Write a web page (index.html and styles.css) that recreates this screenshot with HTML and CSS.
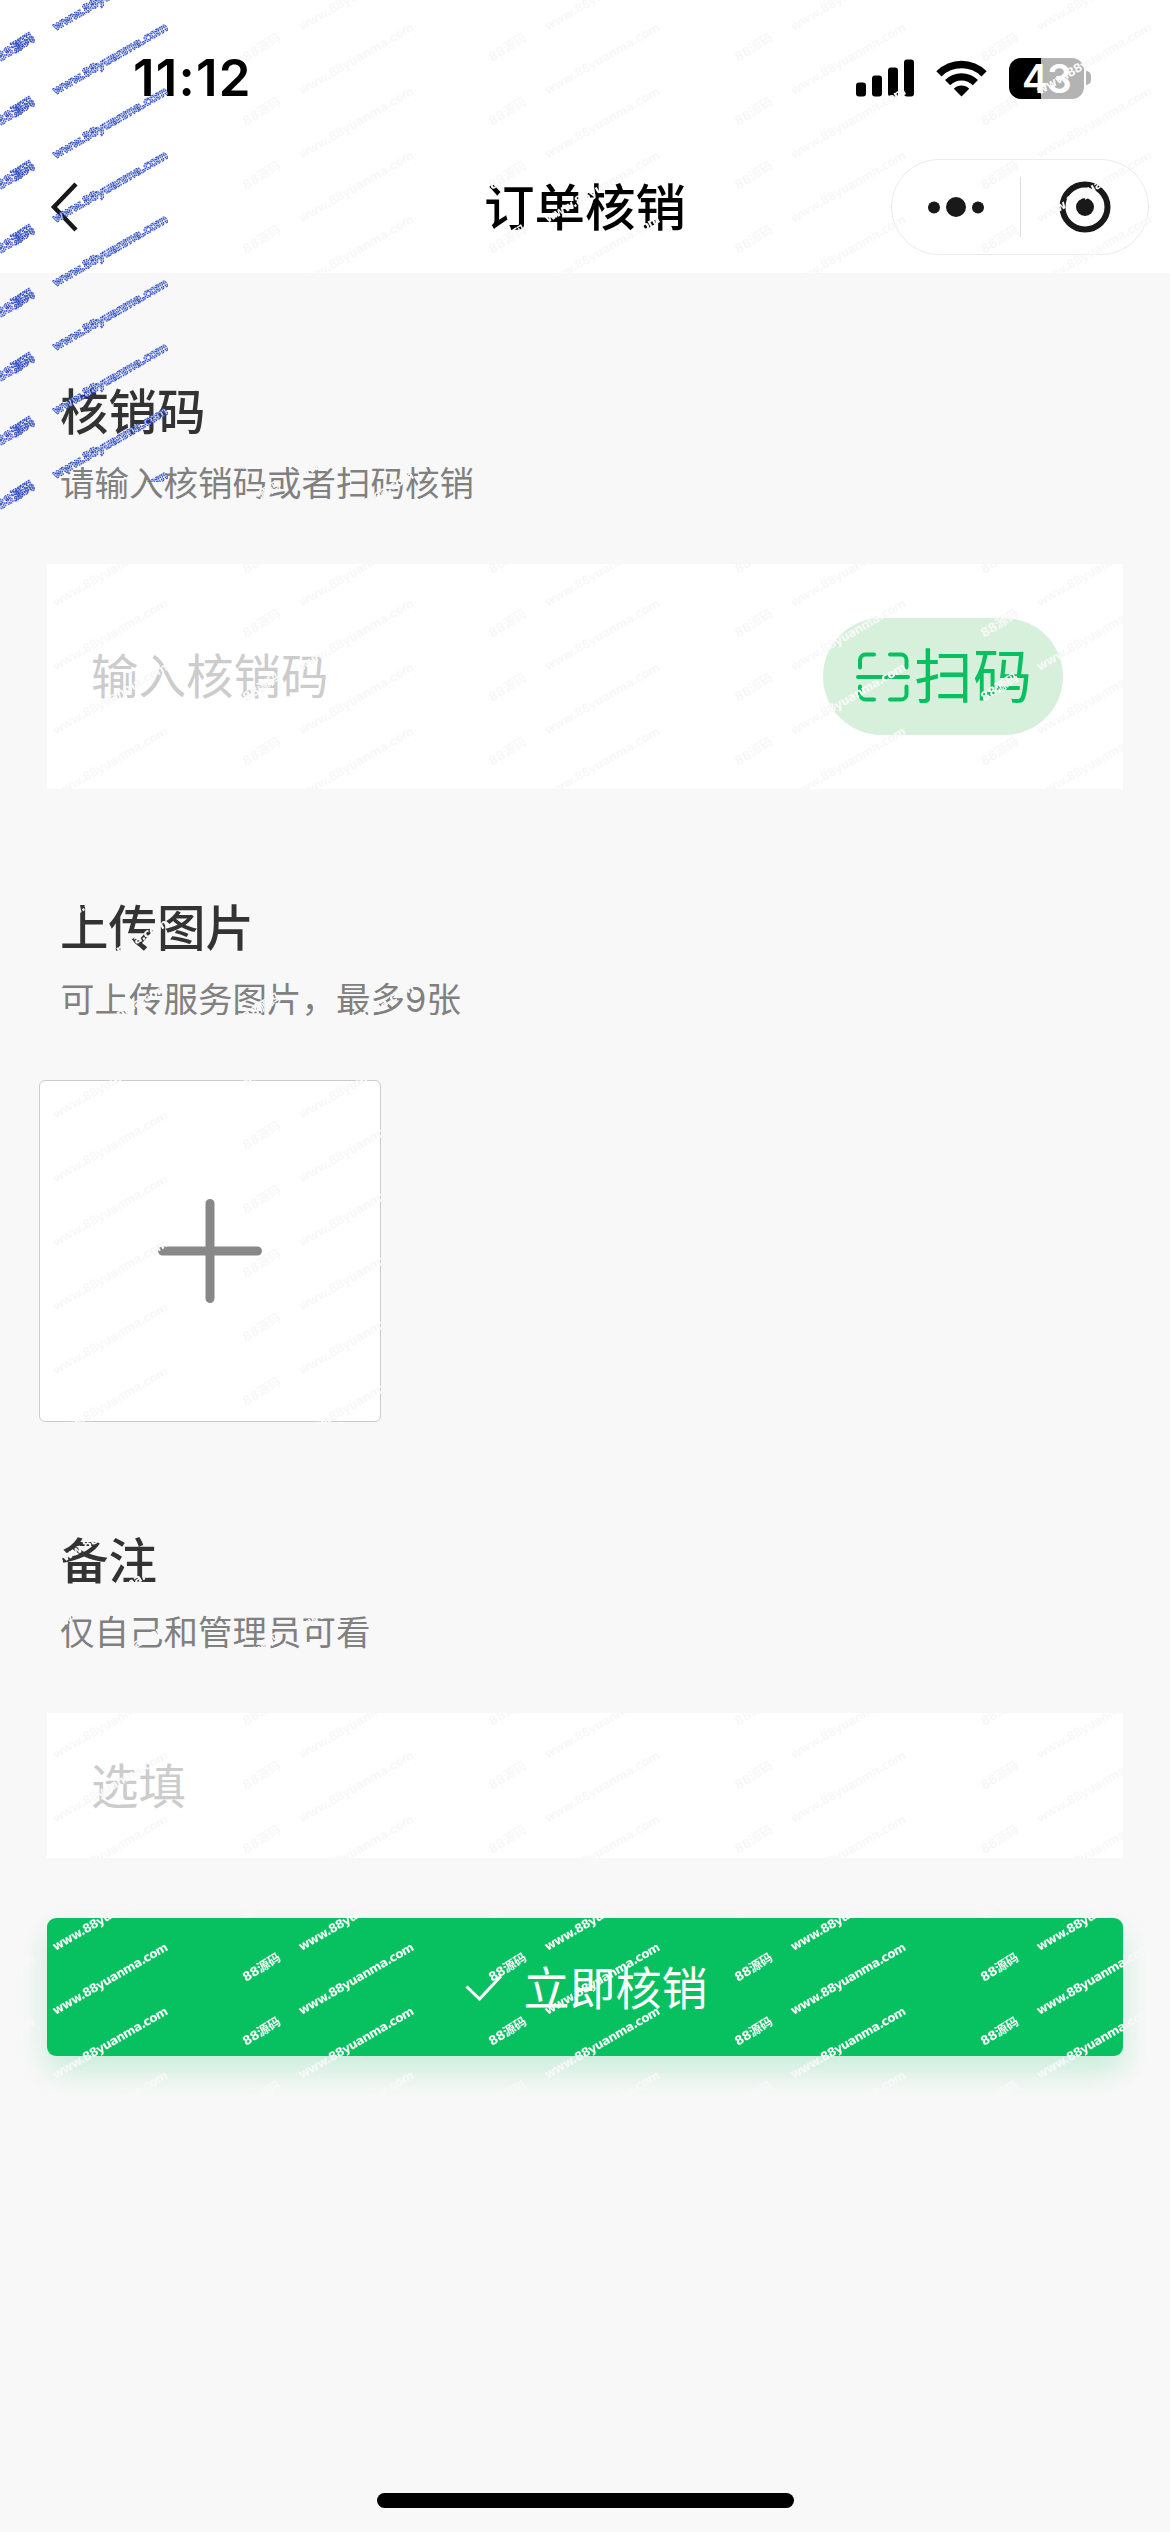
FILE: index.html
```html
<!DOCTYPE html>
<html lang="zh-CN">
<head>
<meta charset="utf-8">
<title>订单核销</title>
<link rel="stylesheet" href="styles.css">
</head>
<body>
<div class="page">
  <header class="header">
    <div class="status">
      <span class="time">11:12</span>
      <div class="status-icons">
        <svg class="signal" viewBox="0 0 58 38"><rect x="0" y="23.5" width="10" height="14" rx="3"/><rect x="16" y="16.500" width="10" height="21" rx="3"/><rect x="32" y="8.500" width="10" height="29" rx="3"/><rect x="48" y="0.500" width="10" height="37" rx="3"/></svg>
        <svg class="wifi" viewBox="0 0 51 38"><path d="M0.300 12.200a35.800 35.800 0 0 1 50.400 0l-5.200 5.300a28.300 28.300 0 0 0-40 0z"/><path d="M9 21a23.400 23.400 0 0 1 33 0l-5.200 5.200a16 16 0 0 0-22.600 0z"/><path d="M17.800 29.700a11 11 0 0 1 15.400 0L25.500 37.400z"/></svg>
        <div class="battery"><span class="battery-body">43</span><span class="battery-cap"></span></div>
      </div>
    </div>
    <div class="navbar">
      <svg class="back" viewBox="0 0 30 52"><path d="M26 3L4 26L26 49"/></svg>
      <h1 class="title">订单核销</h1>
      <div class="capsule">
        <svg class="more" viewBox="0 0 56 20"><circle cx="6" cy="10.500" r="6"/><circle cx="28" cy="10" r="10"/><circle cx="50" cy="10.500" r="6"/></svg>
        <span class="divider"></span>
        <svg class="target" viewBox="0 0 52 52"><circle class="ring" cx="26" cy="26" r="22.500"/><circle cx="26" cy="26" r="9"/></svg>
      </div>
    </div>
  </header>

  <main class="main">
    <section class="section-head">
      <h2>核销码</h2>
      <p>请输入核销码或者扫码核销</p>
    </section>
    <div class="field code-field">
      <span class="placeholder">输入核销码</span>
      <div class="scan">
        <svg class="scan-icon" viewBox="0 0 54 50"><path d="M4 15.500V8a5.500 5.500 0 0 1 5.500-5.500H18M34 2.500h11A5.500 5.500 0 0 1 50.500 8v7.500M4 34.500V42a5.500 5.500 0 0 0 5.500 5.500H18M34 47.500h11A5.500 5.500 0 0 0 50.500 42v-7.500M2 25h50"/></svg>
        <span>扫码</span>
      </div>
    </div>

    <section class="section-head">
      <h2>上传图片</h2>
      <p>可上传服务图片，最多9张</p>
    </section>
    <div class="upload">
      <svg class="plus" viewBox="0 0 106 106"><path d="M53 5.500v95M5.500 53h95"/></svg>
    </div>

    <section class="section-head">
      <h2>备注</h2>
      <p>仅自己和管理员可看</p>
    </section>
    <div class="field note-field"><span class="placeholder">选填</span></div>

    <div class="submit">
      <svg class="check" viewBox="0 0 38 28"><path d="M1.500 12.500L14.500 25L36 2"/></svg>
      <span>立即核销</span>
    </div>
  </main>

  <div class="home-indicator"></div>

  <svg class="watermark" viewBox="0 0 1170 2480">
    <defs>
      <pattern id="wm-light" x="40" y="0" width="246" height="64" patternUnits="userSpaceOnUse">
        <g class="wm-text">
          <text transform="translate(15.500 31) rotate(-30)" textLength="131">www.88yuanma.com</text>
          <text transform="translate(15.500 95) rotate(-30)" textLength="131">www.88yuanma.com</text>
          <text class="wm-name" transform="translate(206 62) rotate(-32)" textLength="42">88源码</text>
        </g>
      </pattern>
      <pattern id="wm-blue" x="-206" y="0" width="246" height="64" patternUnits="userSpaceOnUse">
        <g class="wm-text wm-text-blue">
          <text transform="translate(15.500 31) rotate(-30)" textLength="131">www.88yuanma.com</text>
          <text transform="translate(15.500 95) rotate(-30)" textLength="131">www.88yuanma.com</text>
          <text class="wm-name" transform="translate(206 62) rotate(-32)" textLength="42">88源码</text>
        </g>
      </pattern>
    </defs>
    <path fill="url(#wm-light)" d="M172 0H1170V2480H0V512H172z"/>
    <path fill="url(#wm-blue)" d="M0 0H172V482H40V512H0z"/>
  </svg>
</div>
</body>
</html>
```
FILE: styles.css
```css
* { box-sizing: border-box; }

body {
  margin: 0;
  background: #f8f8f8;
  font-family: "Inter", "Noto Sans CJK SC", sans-serif;
}

.page {
  position: relative;
  display: flex;
  flex-direction: column;
  width: 1170px;
  height: 2532px;
  overflow: hidden;
}

svg { display: block; flex: none; }
h1, h2, p { margin: 0; }

/* Status bar */
.header { height: 273px; background: #fff; }

.status {
  display: flex;
  align-items: center;
  justify-content: space-between;
  height: 156px;
  padding: 0 79px 0 133px;
}

.time {
  font: 600 51px/60px "Inter", sans-serif;
  letter-spacing: 1.2px;
}

.status-icons { display: flex; align-items: center; }
.signal { width: 58px; height: 38px; margin-right: 22px; }
.wifi { width: 51px; height: 38px; margin-right: 22px; }
.battery { display: flex; align-items: center; gap: 2px; }

.battery-body {
  width: 75px;
  height: 41px;
  border-radius: 12px;
  background: linear-gradient(90deg, #000 32px, #b3b3b3 32px);
  color: #fff;
  font: 600 39px/41px "Inter", sans-serif;
  letter-spacing: -1px;
  text-align: center;
}

.battery-cap {
  width: 5px;
  height: 14px;
  border-radius: 0 5px 5px 0;
  background: #b3b3b3;
}

/* Navigation bar */
.navbar {
  display: grid;
  grid-template-columns: 279px 1fr 258px;
  align-items: center;
  height: 102px;
  padding-right: 21px;
}

.back {
  width: 30px;
  height: 52px;
  margin-left: 50px;
  fill: none;
  stroke: #191919;
  stroke-width: 4.5;
}

.title {
  padding-top: 2px;
  font-size: 50.500px;
  font-weight: 500;
  line-height: 70px;
  text-align: center;
}

.capsule {
  display: flex;
  align-items: center;
  height: 96px;
  padding-left: 36px;
  border: 1px solid #ebebeb;
  border-radius: 48px;
  fill: #191919;
}

.more { width: 56px; height: 20px; }
.divider { flex: none; width: 1px; height: 60px; margin: 0 38px 0 36px; background: #dedede; }
.target { width: 52px; height: 52px; }
.ring { fill: none; stroke: #191919; stroke-width: 6; }

/* Form */
.main {
  display: flex;
  flex-direction: column;
  padding: 0 47px;
}

.section-head {
  padding: 105px 13px 0;
  height: 291px;
}

.section-head h2 {
  color: #333;
  font-size: 48.500px;
  font-weight: 500;
  line-height: 70px;
}

.section-head p {
  margin-top: 11px;
  color: #808080;
  font-size: 34.500px;
  line-height: 50px;
}

.field {
  display: flex;
  align-items: center;
  justify-content: space-between;
  background: #fff;
}

.code-field { height: 225px; padding: 0 60px 0 44px; }
.note-field { height: 145px; padding: 3px 44px 0; }
.placeholder { color: #ccc; font-size: 47.500px; line-height: 70px; }

.scan {
  display: flex;
  align-items: center;
  gap: 4px;
  width: 240px;
  height: 117px;
  padding-left: 33px;
  border-radius: 59px;
  background: #d7f0db;
  color: #07c160;
  font-size: 59px;
  line-height: 80px;
}

.scan-icon {
  width: 54px;
  height: 50px;
  fill: none;
  stroke: #07c160;
  stroke-width: 4;
  stroke-linecap: round;
}

.upload {
  display: flex;
  align-items: center;
  justify-content: center;
  width: 342px;
  height: 342px;
  margin-left: -8px;
  border: 1px solid #ccc;
  border-radius: 6px;
  background: #fff;
}

.plus {
  width: 106px;
  height: 106px;
  fill: none;
  stroke: #888;
  stroke-width: 9;
  stroke-linecap: round;
}

.submit {
  display: flex;
  align-items: center;
  justify-content: center;
  gap: 21px;
  height: 138px;
  margin-top: 60px;
  padding: 2px 0 0 2px;
  border-radius: 9px;
  background: #07c160;
  box-shadow: 0 15px 30px rgba(7, 193, 96, 0.2);
  color: #fff;
  font-size: 46px;
  line-height: 70px;
}

.check { width: 38px; height: 28px; fill: none; stroke: #fff; stroke-width: 3; }

.home-indicator {
  width: 417px;
  height: 15px;
  margin: auto auto 24px;
  border-radius: 8px;
  background: #000;
}

/* Repeating diagonal watermark laid over the page */
.watermark {
  position: absolute;
  top: 0;
  left: 0;
  width: 1170px;
  height: 2480px;
  pointer-events: none;
}

.wm-text {
  fill: #f8f8f8;
  font: 700 12px "DejaVu Sans", "Noto Sans CJK SC", sans-serif;
}

.wm-name { font-size: 12.5px; }
.wm-text-blue { fill: #c3ccf0; stroke: #2f4cc0; stroke-width: 1.100; stroke-dasharray: 1.800 0.900; }
```
